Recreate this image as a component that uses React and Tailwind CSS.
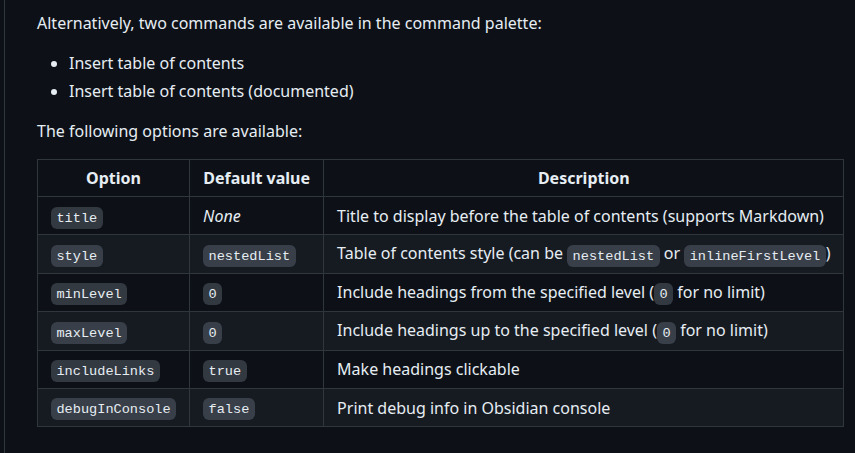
import React from "react";

const C = ({ children }) => (
  <code className="rounded-[6px] bg-[rgba(110,118,129,0.4)] px-[0.4em] py-[3.5px] text-[13.6px] [font-family:'Liberation_Mono',monospace]">
    {children}
  </code>
);

const rows = [
  [<C>title</C>, <em>None</em>, <>Title to display before the table of contents (supports Markdown)</>],
  [<C>style</C>, <C>nestedList</C>, <>Table of contents style (can be <C>nestedList</C> or <C>inlineFirstLevel</C>)</>],
  [<C>minLevel</C>, <C>0</C>, <>Include headings from the specified level (<C>0</C> for no limit)</>],
  [<C>maxLevel</C>, <C>0</C>, <>Include headings up to the specified level (<C>0</C> for no limit)</>],
  [<C>includeLinks</C>, <C>true</C>, <>Make headings clickable</>],
  [<C>debugInConsole</C>, <C>false</C>, <>Print debug info in Obsidian console</>],
];

export default function App() {
  return (
    <div className="h-[453px] w-[855px] overflow-hidden bg-[#0d1117] text-[16px] leading-[1.5] text-[#e6edf3] [font-family:'Noto_Sans',sans-serif]">
      <div className="ml-[4px] h-full border-l border-[#30363d] pl-[32px] pt-[11px]">
        <p className="mb-[16px]">Alternatively, two commands are available in the command palette:</p>
        <ul className="mb-[16px] list-disc pl-[32px]">
          <li>Insert table of contents</li>
          <li className="mt-[4px]">Insert table of contents (documented)</li>
        </ul>
        <p className="mb-[16px]">The following options are available:</p>
        <table className="border-collapse">
          <thead>
            <tr>
              <th className="w-[152px] border border-[#30363d] px-[13px] py-[6px] text-center font-bold">Option</th>
              <th className="w-[134px] border border-[#30363d] px-[13px] py-[6px] text-center font-bold">Default value</th>
              <th className="w-[520px] border border-[#30363d] px-[13px] py-[6px] text-center font-bold">Description</th>
            </tr>
          </thead>
          <tbody>
            {rows.map((r, i) => (
              <tr key={i} className={i % 2 === 1 ? "bg-[#161b22]" : "bg-[#0d1117]"}>
                {r.map((c, j) => (
                  <td key={j} className="whitespace-nowrap border border-[#30363d] px-[13px] py-[6px] text-left">
                    {c}
                  </td>
                ))}
              </tr>
            ))}
          </tbody>
        </table>
      </div>
    </div>
  );
}
